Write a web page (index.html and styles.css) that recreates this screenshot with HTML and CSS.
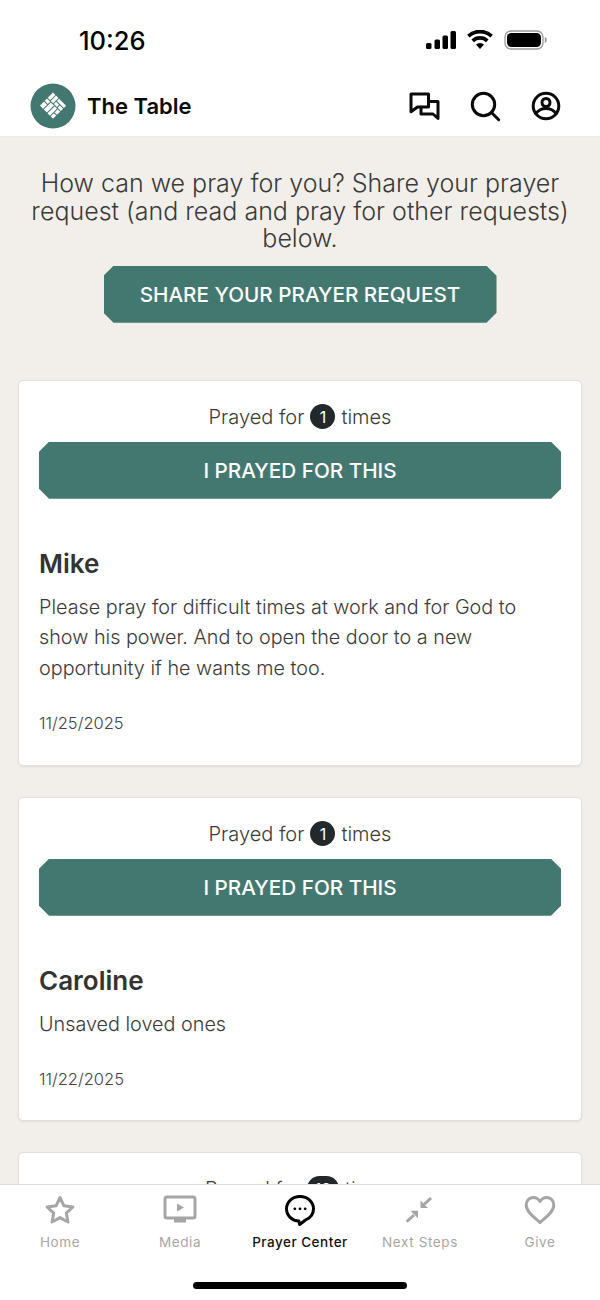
FILE: index.html
```html
<!DOCTYPE html>
<html lang="en">
<head>
<meta charset="utf-8">
<title>The Table</title>
<link rel="stylesheet" href="styles.css">
</head>
<body>
<div class="phone">
  <div class="status">
    <span class="time">10:26</span>
    <div class="status-icons">
      <svg class="signal" width="32" height="20" viewBox="0 0 32 20"><rect x="1" y="13" width="5.500" height="6" rx="1.500"/><rect x="9.500" y="9.500" width="5.500" height="9.500" rx="1.500"/><rect x="17.500" y="5.500" width="5.500" height="13.500" rx="1.500"/><rect x="25.500" y="1" width="5.500" height="18" rx="1.500"/></svg>
      <svg class="wifi" width="28" height="20" viewBox="0 0 28 20"><path d="M14 19l-4-4.500a5.800 5.800 0 0 1 8 0z"/><path d="M6.700 10.800a10.600 10.600 0 0 1 14.600 0" class="arc"/><path d="M2.400 6.200a16.800 16.800 0 0 1 23.200 0" class="arc"/></svg>
      <svg class="battery" width="44" height="22" viewBox="0 0 44 22"><rect x="1" y="2" width="38" height="18" rx="6" fill="none" stroke="#999" stroke-width="1.300"/><rect x="3" y="4" width="34" height="14" rx="4.200"/><path d="M40.800 8v6c1.300-.4 2-1.600 2-3s-.7-2.600-2-3z" fill="#999"/></svg>
    </div>
  </div>
  <header class="app-bar">
    <div class="brand">
      <span class="logo">
        <svg width="46" height="46" viewBox="0 0 46 46"><circle cx="23" cy="23" r="22.500" fill="#437870"/><g fill="#fff" transform="rotate(45 23 23)"><rect x="13.500" y="13.500" width="3.400" height="7.500"/><rect x="17.800" y="13.500" width="3.400" height="7.500"/><rect x="22.100" y="13.500" width="10" height="3.200"/><rect x="22.100" y="17.800" width="4.400" height="3.200"/><rect x="27.500" y="17.800" width="4.600" height="3.200"/><rect x="13.500" y="22" width="4.400" height="3.200"/><rect x="18.900" y="22" width="4.400" height="10"/><rect x="13.500" y="26.300" width="4.400" height="5.700"/><rect x="24.300" y="22" width="3.400" height="10"/><rect x="28.700" y="22" width="3.400" height="4.400"/><rect x="28.700" y="27.500" width="3.400" height="4.500"/></g></svg>
      </span>
      <span class="brand-name">The Table</span>
    </div>
    <div class="bar-actions">
      <svg width="32" height="32" viewBox="0 0 32 32" class="bar-icon"><path d="M3 4h17.500v13h-11l-6.500 4.700z"/><path d="M13 17v7h12l5 4.500V11.500H20.500"/></svg>
      <svg width="32" height="32" viewBox="0 0 32 32" class="bar-icon"><circle cx="14.500" cy="14.500" r="11.200"/><path d="M22.700 22.700l7 7"/></svg>
      <svg width="32" height="32" viewBox="0 0 32 32" class="bar-icon"><circle cx="16" cy="16" r="12.800"/><circle cx="16" cy="12.500" r="4"/><path d="M5.800 23.500c2.600-3.300 6.200-5 10.200-5s7.600 1.700 10.200 5"/></svg>
    </div>
  </header>
  <main class="content">
    <section class="intro">
      <p class="intro-text">How can we pray for you? Share your prayer request (and read and pray for other requests) below.</p>
      <button class="cut-btn share-btn">SHARE YOUR PRAYER REQUEST</button>
    </section>
    <article class="card">
      <div class="count-row">Prayed for <span class="count">1</span> times</div>
      <button class="cut-btn pray-btn">I PRAYED FOR THIS</button>
      <h2 class="name">Mike</h2>
      <p class="body">Please pray for difficult times at work and for God to show his power. And to open the door to a new opportunity if he wants me too.</p>
      <p class="date">11/25/2025</p>
    </article>
    <article class="card">
      <div class="count-row">Prayed for <span class="count">1</span> times</div>
      <button class="cut-btn pray-btn">I PRAYED FOR THIS</button>
      <h2 class="name">Caroline</h2>
      <p class="body">Unsaved loved ones</p>
      <p class="date">11/22/2025</p>
    </article>
    <article class="card">
      <div class="count-row">Prayed for <span class="count wide">12</span> times</div>
    </article>
  </main>
  <nav class="tabs">
    <div class="tab">
      <svg width="34" height="34" viewBox="0 0 34 34" class="tab-icon"><path d="M17 4.500l3.900 8.300 9 1.100-6.600 6.200 1.700 8.900-8-4.400-8 4.400 1.700-8.900-6.600-6.200 9-1.100z"/></svg>
      <span>Home</span>
    </div>
    <div class="tab">
      <svg width="34" height="34" viewBox="0 0 34 34" class="tab-icon"><rect x="2" y="4" width="30" height="21" rx="2"/><path class="solid" d="M14 10.500l7 4-7 4z"/><rect class="solid" x="11" y="26" width="12" height="3.500"/></svg>
      <span>Media</span>
    </div>
    <div class="tab active">
      <svg width="34" height="34" viewBox="0 0 34 34" class="tab-icon"><path d="M17 3.500c7.700 0 13.500 5.300 13.500 12.300 0 5.200-3.300 9.400-8.300 11.400l-5.600 4.300-.8-3.500C8.900 27.800 3.500 22.500 3.500 15.800 3.500 8.800 9.300 3.500 17 3.500z"/><circle class="solid" cx="11.800" cy="15.800" r="1.400"/><circle class="solid" cx="17" cy="15.800" r="1.400"/><circle class="solid" cx="22.200" cy="15.800" r="1.400"/></svg>
      <span>Prayer Center</span>
    </div>
    <div class="tab">
      <svg width="34" height="34" viewBox="0 0 34 34" class="tab-icon"><path class="solid" d="M17.500 7.500V15H25z"/><path class="shaft" d="M28 5l-7 6.500"/><path class="solid" d="M15 17.700H7.500l7.500 7.500z"/><path class="shaft" d="M3.700 28.700L11 22"/></svg>
      <span>Next Steps</span>
    </div>
    <div class="tab">
      <svg width="34" height="34" viewBox="0 0 34 34" class="tab-icon"><path d="M17 29.500C10 23.500 3.200 18.500 3.200 11.800 3.200 7.500 6.500 4.500 10.300 4.500c2.900 0 5.200 1.500 6.700 4 1.500-2.500 3.800-4 6.700-4 3.800 0 7.100 3 7.100 7.300 0 6.700-6.800 11.700-13.800 17.700z"/></svg>
      <span>Give</span>
    </div>
    <div class="home-indicator"></div>
  </nav>
</div>
</body>
</html>
```
FILE: styles.css
```css
* { box-sizing: border-box; }
html, body { margin: 0; padding: 0; }
body { width: 600px; height: 1300px; overflow: hidden; font-family: "Inter", "Liberation Sans", sans-serif; font-weight: 300; background: #f2efea; color: #333; }
.phone { width: 600px; height: 1300px; display: flex; flex-direction: column; position: relative; overflow: hidden; }
.status { height: 74px; background: #fff; display: flex; justify-content: space-between; align-items: flex-start; padding: 26px 52px 0 79px; }
.time { font-size: 25.500px; font-weight: 500; line-height: 30px; color: #000; }
.status-icons { display: flex; align-items: center; gap: 9px; padding-top: 3px; }
.status-icons svg { fill: #000; display: block; }
.wifi .arc { fill: none; stroke: #000; stroke-width: 3.800; }
.status-icons .battery { margin-left: 1px; }
.app-bar { height: 63px; background: #fff; display: flex; justify-content: space-between; align-items: center; padding: 2px 38px 0 30px; border-bottom: 1px solid #efece7; }
.brand { display: flex; align-items: center; gap: 11px; }
.logo { display: block; width: 46px; height: 46px; }
.logo svg { display: block; }
.brand-name { font-size: 22px; font-weight: 600; color: #0b0b0b; }
.bar-actions { display: flex; gap: 29px; }
.bar-icon { display: block; fill: none; stroke: #0a0a0a; stroke-width: 3; stroke-linejoin: round; stroke-linecap: round; }
.content { flex: 1; padding: 33px 18px 0; overflow: hidden; }
.intro { display: flex; flex-direction: column; align-items: center; }
.intro-text { margin: 0; font-size: 25px; line-height: 27.600px; text-align: center; color: #3a3a3a; }
.cut-btn { border: 0; background: #437870; color: #fff; font-family: "Inter", sans-serif; font-weight: 500; font-size: 20.700px; clip-path: polygon(10px 0, calc(100% - 10px) 0, 100% 10px, 100% calc(100% - 10px), calc(100% - 10px) 100%, 10px 100%, 0 calc(100% - 10px), 0 10px); display: block; padding: 0; }
.share-btn { width: 393px; height: 57px; margin-top: 13px; }
.pray-btn { width: 100%; height: 57px; }
.card { background: #fff; border: 1px solid #e4e1dc; border-radius: 5px; box-shadow: 0 1px 2px rgba(0,0,0,.08); padding: 21px 20px 0; margin-top: 31px; height: 386px; }
.intro + .card { margin-top: 57px; }
.card + .card { height: 324px; }
.card + .card + .card { height: 200px; }
.count-row { display: flex; align-items: center; justify-content: center; gap: 6px; font-size: 20px; line-height: 30px; color: #3a3a3a; margin-bottom: 10px; }
.count { width: 25px; height: 25px; border-radius: 50%; background: #23282b; color: #fff; font-size: 16px; font-weight: 400; display: flex; align-items: center; justify-content: center; }
.count.wide { width: 32px; border-radius: 13px; }
.name { margin: 48px 0 0; font-size: 26px; line-height: 34px; font-weight: 600; color: #333; }
.body { margin: 11px 0 0; font-size: 19.800px; line-height: 30.500px; color: #3a3a3a; }
.date { margin: 28px 0 0; font-size: 16.500px; line-height: 24px; color: #444; }
.tabs { position: absolute; left: 0; right: 0; bottom: 0; height: 116px; background: #fff; border-top: 1px solid #dedede; display: grid; grid-template-columns: repeat(5, 120px); padding-top: 8px; align-items: start; }
.tab { display: flex; flex-direction: column; align-items: center; gap: 6px; color: #a6a6a6; font-size: 13.500px; font-weight: 400; letter-spacing: .6px; line-height: 18px; }
.tab.active { color: #111; font-weight: 500; letter-spacing: .5px; }
.tab-icon { display: block; fill: none; stroke: #a6a6a6; stroke-width: 3; stroke-linejoin: round; }
.tab-icon .solid { fill: #a6a6a6; stroke: none; }
.tab-icon .shaft { stroke-width: 3; }
.active .tab-icon { stroke: #000; }
.active .tab-icon .solid { fill: #000; }
.home-indicator { position: absolute; left: 193px; bottom: 11px; width: 214px; height: 7px; border-radius: 4px; background: #000; }
```
